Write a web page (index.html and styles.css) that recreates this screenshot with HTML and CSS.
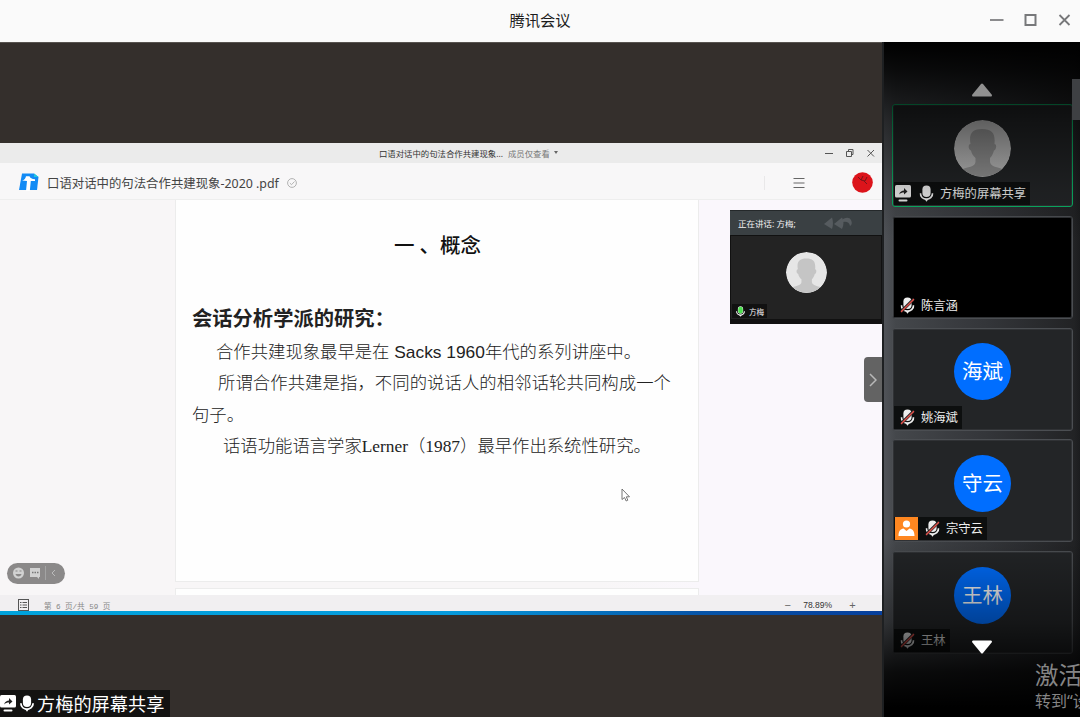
FILE: index.html
```html
<!DOCTYPE html>
<html lang="zh-CN">
<head>
  <meta charset="UTF-8">
  <meta name="viewport" content="width=device-width, initial-scale=1.0">
  <title>腾讯会议</title>
  <link rel="stylesheet" href="styles.css">
</head>
<body>

  <svg class="defs" width="0" height="0">
    <symbol id="mic" viewBox="0 0 14 17">
      <rect x="2.9" y="0.5" width="8.2" height="11.5" rx="4.1" fill="currentColor"/>
      <path d="M0.9 8.2c0 7.800 12.200 7.800 12.200 0" fill="none" stroke="currentColor" stroke-width="1.8"/>
      <path d="M5 14h4l-2 2.800z" fill="currentColor"/>
    </symbol>
    <symbol id="mic-off" viewBox="0 0 14 17">
      <use href="#mic"/>
      <path d="M0.6 14.6L13.3 2" stroke="#222" stroke-width="3"/>
      <path d="M0.4 15L13.6 2" stroke="#e2504a" stroke-width="1.5"/>
    </symbol>
    <symbol id="share" viewBox="0 0 16 17">
      <rect width="16" height="12.5" rx="1.5" fill="currentColor"/>
      <path d="M4 9.5C5 6.500 7 5.500 9 5.500V3l3.500 3.500L9 9.500V7.500C7 7.500 5.500 8 4 9.500z" fill="#222"/>
      <rect x="3.500" y="14.500" width="9" height="2" rx="1" fill="currentColor"/>
    </symbol>
    <symbol id="person" viewBox="0 0 57 57">
      <path d="M9 49C13 47 21 47 21.500 42L21.500 38C19 36 17.500 33 17 30.500C14 30 14 24 16.500 24C14.500 13 19 9 28 9C38 9 41.500 13 40.500 24C43 24 42.500 30 40 30.500C39 34 38 36 36 38L36 42C37 47 44 47 48 49C38 59 19 59 9 49Z"/>
    </symbol>
  </svg>

  <!-- Título da janela -->
  <header class="titlebar">
    <span class="titlebar-text">腾讯会议</span>
    <svg class="titlebar-buttons" width="84" height="14" viewBox="0 0 84 14" fill="none">
      <path d="M0 7h13.500" stroke="#8b8b8d" stroke-width="2"/>
      <rect x="35.500" y="2" width="10" height="10" stroke="#77787a" stroke-width="2"/>
      <path d="M69.500 2l10 10M79.500 2l-10 10" stroke="#77787a" stroke-width="1.800"/>
    </svg>
  </header>

  <main class="meeting">
    <section class="stage">
      <div class="screen">
        <div class="win-title">
          <span class="win-name">口语对话中的句法合作共建现象...</span>
          <span class="win-perm">成员仅查看</span>
          <i class="caret"></i>
          <svg class="win-buttons" width="52" height="10" viewBox="0 0 52 10" fill="none" stroke="#555" stroke-width="1">
            <path d="M1 5.500h8M43.500 2l6.500 6.500M50 2l-6.500 6.500"/>
            <path d="M22.500 3.500h5v5h-5zM24.500 3.500v-2h4.500v5h-1.500"/>
          </svg>
        </div>

        <div class="toolbar">
          <svg class="doc-logo" width="20" height="18" viewBox="0 0 20 18">
            <path d="M3 0.500H15L19.500 4L18 17H0z" fill="#138bf5"/>
            <path d="M15 0.500L19.500 4H15z" fill="#20c8dc"/>
            <path d="M3 7.600C5.500 7 6.500 5.500 7 3.200L10.500 3.200C11 5 13 6 16 6.300V8H11.800L10.800 18H7L8 8z" fill="#fff"/>
          </svg>
          <span class="doc-name">口语对话中的句法合作共建现象-2020 .pdf</span>
          <svg class="doc-check" width="10" height="10" viewBox="0 0 10 10" fill="none" stroke="#aaa" stroke-width="0.900">
            <circle cx="5" cy="5" r="4.400"/>
            <path d="M2.800 5l1.700 1.700L7.500 3.500"/>
          </svg>
          <span class="tool-divider"></span>
          <svg class="menu-icon" width="12" height="12" viewBox="0 0 12 12" stroke="#666" stroke-width="1.100">
            <path d="M0.500 1.500h11M0.500 6h11M0.500 10.500h11"/>
          </svg>
          <svg class="user-icon" width="21" height="21" viewBox="0 0 21 21">
            <circle cx="10.500" cy="10.500" r="10.300" fill="#dc141b"/>
            <path d="M6 5l3 3 2-4M9 8l4 1 2-4M12 9l3 3" fill="none" stroke="#77151a" stroke-width="1"/>
          </svg>
        </div>

        <div class="document">
          <div class="page">
            <h1>一<span class="gap"></span>、概念</h1>
            <h2>会话分析学派的研究：</h2>
            <p class="line line-1">合作共建现象最早是在<span class="latin"> Sacks 1960</span>年代的系列讲座中。</p>
            <p class="line line-2">所谓合作共建是指，不同的说话人的相邻话轮共同构成一个</p>
            <p class="line">句子。</p>
            <p class="line line-4">话语功能语言学家<span class="roman">Lerner</span>（<span class="roman">1987</span>）最早作出系统性研究。</p>
          </div>
          <div class="page-next"></div>

          <svg class="cursor" width="10" height="14" viewBox="0 0 10 14">
            <path d="M1 1v10.500l2.500-2 1.700 3.500 1.600-0.800-1.500-3.400H8.500z" fill="#fff" stroke="#666" stroke-width="0.900"/>
          </svg>

          <div class="reactions">
            <svg width="58" height="20" viewBox="0 0 58 20">
              <circle cx="11.500" cy="10" r="5.500" fill="#d2d2d2"/>
              <path d="M8.500 11h6c-.5 3.200-5.500 3.200-6 0z" fill="#8b8989"/>
              <path d="M8.500 8h2M12.500 8h2" stroke="#8b8989" stroke-width="1"/>
              <path d="M23 5h10v9h-1v2l-2-2h-7z" fill="#d2d2d2"/>
              <path d="M25 9.500h1.500M27.500 9.500h1.500M30 9.500h1.500" stroke="#777" stroke-width="1.300"/>
              <path d="M38.500 3v14" stroke="#a3a3a3" stroke-width="1"/>
              <path d="M48 7l-3 3 3 3" fill="none" stroke="#bbb" stroke-width="1"/>
            </svg>
          </div>

          <div class="pip">
            <div class="pip-head">
              <span>正在讲话: 方梅;</span>
              <svg width="30" height="14" viewBox="0 0 30 14">
                <path d="M0 8l8-6.500q2 6 0 11.500zM10 8l8-6.500q3 5 0 11.500zM19 3q6-3 8 1 2 4-1 6-1-5-7-4z" fill="#565b5f"/>
              </svg>
            </div>
            <div class="pip-body">
              <svg class="pip-avatar" viewBox="0 0 57 57"><circle cx="28.500" cy="28.500" r="28.500" fill="#e6e6e6"/><use href="#person" fill="#c5c5c5"/></svg>
              <div class="pip-label">
                <svg class="mic-small" viewBox="0 0 14 17"><use href="#mic"/><rect x="3.500" y="1" width="7" height="10.500" rx="3.500" fill="#4be04e"/></svg>
                <span>方梅</span>
              </div>
            </div>
          </div>
        </div>

        <footer class="status">
          <svg class="list-icon" width="11" height="12" viewBox="0 0 11 12" fill="none" stroke="#555" stroke-width="1">
            <rect x="0.500" y="0.500" width="10" height="11"/>
            <path d="M2 3.500h1.500M4.500 3.500H9M2 6h1.500M4.500 6H9M2 8.500h1.500M4.500 8.500H9"/>
          </svg>
          <span class="page-count">第 6 页/共 59 页</span>
          <span class="zoom"><b>−</b><span>78.89%</span><b>+</b></span>
        </footer>
        <div class="taskbar"></div>
      </div>

      <button class="collapse">
        <svg width="8" height="14" viewBox="0 0 8 14"><path d="M1 1l6 6-6 6" fill="none" stroke="#b8b8b8" stroke-width="1.500"/></svg>
      </button>

      <div class="stage-label">
        <svg class="share-icon" viewBox="0 0 16 17"><use href="#share"/></svg>
        <svg class="mic-icon" viewBox="0 0 14 17"><use href="#mic"/></svg>
        <span>方梅的屏幕共享</span>
      </div>
    </section>

    <!-- Lista de participantes -->
    <aside class="sidebar">
      <div class="tiles">
        <div class="tile speaking">
          <svg class="avatar avatar-empty" viewBox="0 0 57 57"><circle cx="28.500" cy="28.500" r="28.500" fill="#c2c2c2"/><use href="#person" fill="#979797"/></svg>
          <div class="tag tag-share">
            <svg class="share-icon" viewBox="0 0 16 17"><use href="#share"/></svg>
            <svg class="mic-icon" viewBox="0 0 14 17"><use href="#mic"/></svg>
            <span>方梅的屏幕共享</span>
          </div>
        </div>
        <div class="tile video">
          <div class="tag">
            <svg class="mic-icon" viewBox="0 0 14 17"><use href="#mic-off"/></svg>
            <span>陈言涵</span>
          </div>
        </div>
        <div class="tile">
          <div class="avatar">海斌</div>
          <div class="tag">
            <svg class="mic-icon" viewBox="0 0 14 17"><use href="#mic-off"/></svg>
            <span>姚海斌</span>
          </div>
        </div>
        <div class="tile">
          <div class="avatar">守云</div>
          <div class="tag tag-host">
            <svg class="host-icon" width="23" height="23" viewBox="0 0 23 23">
              <rect width="23" height="23" fill="#ff8720"/>
              <circle cx="11.500" cy="7" r="3.600" fill="#fff"/>
              <path d="M3.500 19c0-5 2-7 5-7.500l3 2.500 3-2.500c3 .5 5 2.500 5 7.500z" fill="#fff"/>
            </svg>
            <svg class="mic-icon" viewBox="0 0 14 17"><use href="#mic-off"/></svg>
            <span>宗守云</span>
          </div>
        </div>
        <div class="tile">
          <div class="avatar">王林</div>
          <div class="tag">
            <svg class="mic-icon" viewBox="0 0 14 17"><use href="#mic-off"/></svg>
            <span>王林</span>
          </div>
        </div>
      </div>
      <div class="fade"></div>
      <svg class="arrow arrow-up" width="22" height="14" viewBox="0 0 22 14"><path d="M10 1q1-1 2 0l9 11q0 1.500-1 1.500H2q-1 0-1-1.500z" fill="#909090"/></svg>
      <svg class="arrow arrow-down" width="22" height="14" viewBox="0 0 22 14"><path d="M10 13q1 1 2 0l9-11q0-1.500-1-1.500H2q-1 0-1 1.500z" fill="#fff"/></svg>
      <div class="scroll-tab"></div>
      <div class="watermark">
        <div class="watermark-big">激活</div>
        <div class="watermark-small">转到“设</div>
      </div>
    </aside>
  </main>

</body>
</html>
```
FILE: styles.css
```css
* {
  box-sizing: border-box;
}
body {
  margin: 0;
  width: 1080px;
  height: 717px;
  overflow: hidden;
  display: flex;
  flex-direction: column;
  font-family: "Noto Sans", "Noto Sans CJK SC", sans-serif;
  background: #342f2c;
}
svg {
  display: block;
  flex: none;
}
.defs {
  position: absolute;
}
span {
  white-space: nowrap;
}
/* Barra de título */
.titlebar {
  height: 42px;
  flex: none;
  display: grid;
  grid-template-columns: 1fr auto 1fr;
  align-items: center;
  padding-bottom: 2px;
  background: #fafafa;
}
.titlebar-text {
  grid-column: 2;
  padding-bottom: 2px;
  font-size: 15.300px;
  color: #1c1c1c;
}
.titlebar-buttons {
  justify-self: end;
  margin-right: 6px;
}
.meeting {
  display: flex;
  height: 675px;
}
/* Tela compartilhada */
.stage {
  position: relative;
  width: 882px;
  padding-top: 101px;
  background: #342f2c;
  border-top: 1px solid #57534f;
}
.screen {
  display: flex;
  flex-direction: column;
  height: 472px;
  margin-top: -1px;
}
.win-title {
  height: 20px;
  display: flex;
  align-items: center;
  padding: 0 0 1px 379px;
  background: #ebebeb;
  font-size: 8.400px;
  color: #333;
}
.win-perm {
  margin-left: 5px;
  color: #777;
}
.caret {
  margin-left: 4px;
  border: 2px solid transparent;
  border-top: 3px solid #666;
  border-bottom: 0;
}
.win-buttons {
  margin-left: auto;
  margin-right: 6px;
}
.toolbar {
  height: 37px;
  display: flex;
  align-items: center;
  padding: 3px 9px 0 19px;
  background: #f8f7f8;
  border-bottom: 1px solid #eee;
}
.doc-logo {
  margin-bottom: 2px;
}
.doc-name {
  margin-left: 8px;
  padding-top: 1px;
  font-size: 12.400px;
  color: #444;
}
.doc-check {
  margin-left: 8px;
}
.tool-divider {
  width: 1px;
  height: 14px;
  margin-left: auto;
  background: #e9e8e9;
}
.menu-icon {
  margin-left: 28px;
}
.user-icon {
  margin-left: 47px;
}
.document {
  position: relative;
  height: 395px;
  padding-left: 175px;
  background: linear-gradient(90deg, #f8f6f7 0, #f8f6f7 600px, #faf7fc 700px);
}
.page {
  width: 524px;
  height: 382px;
  background: #fefefe;
  border: 1px solid #ececec;
  border-top: 0;
  padding: 30px 0 0 16px;
}
.page-next {
  width: 524px;
  height: 7px;
  margin-top: 6px;
  background: #fefefe;
  border: 1px solid #ececec;
  border-bottom: 0;
}
.page h1 {
  margin: 0 0 0 202px;
  font-size: 20.500px;
  line-height: 30px;
  font-weight: 500;
  color: #111;
}
.gap {
  display: inline-block;
  width: 5px;
}
.page h2 {
  margin: 43px 0 3px;
  font-size: 20.300px;
  line-height: 30px;
  font-weight: 700;
  color: #222;
}
.line {
  margin: 0;
  height: 31.300px;
  font-size: 17.350px;
  line-height: 31.300px;
  font-weight: 300;
  white-space: nowrap;
  color: #222;
}
.line-1 {
  padding-left: 24px;
}
.line-2 {
  padding-left: 26px;
  letter-spacing: 0.080px;
}
.line-4 {
  padding-left: 31px;
}
.latin {
  font-family: "Liberation Sans", Arial, sans-serif;
  font-weight: 400;
  white-space: pre;
}
.roman {
  font-family: "Liberation Serif", "Times New Roman", serif;
  font-weight: 400;
}
.cursor {
  position: absolute;
  left: 621px;
  top: 288px;
}
.reactions {
  position: absolute;
  left: 7px;
  top: 363px;
  height: 21px;
  border-radius: 11px;
  background: #8b8989;
}
/* Miniatura do orador */
.pip {
  position: absolute;
  left: 730px;
  top: 10px;
  width: 152px;
  height: 114px;
  background: #232323;
  color: #f2f2f2;
}
.pip-head {
  height: 25px;
  display: flex;
  align-items: center;
  justify-content: space-between;
  padding: 0 28px 0 8px;
  background: #3a4043;
  border-top: 1px solid #24282a;
  font-size: 8.500px;
}
.pip-head span {
  padding-bottom: 1px;
}
.pip-body {
  position: relative;
  height: 89px;
  padding-top: 16px;
  border: 1px solid #111;
  border-width: 1px 1px 5px;
}
.pip-avatar {
  width: 41px;
  height: 41px;
  margin: 0 auto;
  border-radius: 50%;
}
.pip-label {
  position: absolute;
  left: 1px;
  bottom: 1px;
  display: flex;
  align-items: center;
  gap: 4px;
  height: 14px;
  padding: 0 3px 0 4px;
  background: #111;
  font-size: 7.600px;
}
.mic-small {
  width: 9px;
  height: 11px;
}
/* Rodapé do documento */
.status {
  height: 17px;
  display: flex;
  align-items: center;
  padding: 2px 25px 0 18px;
  background: #f1eff1;
}
.page-count {
  margin-left: 15px;
  padding-top: 2px;
  font-family: "Liberation Mono", "Noto Sans CJK SC", monospace;
  font-size: 7.600px;
  letter-spacing: -0.050px;
  color: #888;
}
.zoom {
  margin-left: auto;
  display: flex;
  align-items: center;
  gap: 11px;
  font-family: "Liberation Sans", Arial, sans-serif;
  font-size: 8.500px;
  color: #333;
}
.zoom span {
  margin-right: 5px;
}
.zoom b {
  width: 9px;
  font-size: 11px;
  line-height: 12px;
  text-align: center;
  font-weight: 400;
  color: #666;
}
.taskbar {
  height: 4px;
  margin-top: -1px;
  background: linear-gradient(90deg, #00a3dc 0, #079bdd 450px, #0654a8 700px, #063f9c 100%);
}
.collapse {
  position: absolute;
  right: 0;
  top: 314px;
  width: 18px;
  height: 45px;
  padding: 0 0 0 5px;
  border: 0;
  border-radius: 4px 0 0 4px;
  background: #636363;
}
.stage-label {
  position: absolute;
  left: 0;
  bottom: 0;
  width: 170px;
  height: 27px;
  display: flex;
  align-items: center;
  background: #131211;
  color: #fff;
  font-size: 18.200px;
}
.stage-label span {
  padding-bottom: 2px;
}
.stage-label .mic-icon {
  margin: 0 3px 0 4px;
}
.share-icon {
  width: 16px;
  height: 17px;
}
.mic-icon {
  width: 14px;
  height: 17px;
}
/* Participantes */
.sidebar {
  position: relative;
  width: 198px;
  padding: 62px 7px 0 10px;
  overflow: hidden;
  border-left: 2px solid #1e2022;
  background: linear-gradient(90deg, #505358 0, #44474b 12px, #34363a 100px, #222325 190px, #1c1d1f 100%);
}
.tiles {
  display: grid;
  grid-template-rows: repeat(5, 103px);
  row-gap: 8.800px;
  margin-left: -2px;
}
.tile {
  position: relative;
  width: 181px;
  padding-top: 14.500px;
  border: 1px solid #4b4e52;
  border-radius: 3px;
  box-shadow: inset 0 0 0 1px #303235;
  background: #232527;
}
.tile.speaking {
  border-color: #0bb567;
}
.tile.video,
.video .tag {
  background: #000;
}
.avatar {
  width: 57px;
  height: 57px;
  margin: 0 auto;
  border-radius: 50%;
  background: #006eff;
  color: #fff;
  font-size: 20.500px;
  line-height: 56px;
  text-align: center;
}
.avatar-empty {
  background: none;
}
.tag {
  position: absolute;
  left: 1px;
  bottom: 1px;
  height: 23px;
  display: flex;
  align-items: center;
  gap: 6px;
  padding: 0 4px 0 6px;
  background: #0d0f0f;
  color: #eee;
  font-size: 12.300px;
}
.tag span {
  padding-bottom: 1px;
}
.tag .mic-icon {
  width: 15px;
  height: 17px;
}
.tag-share {
  padding: 0 4px 0 1px;
}
.tag-share .mic-icon {
  margin-left: 2px;
}
.tag-host {
  padding-left: 1px;
}
.tag-host .mic-icon {
  margin-left: 1px;
}
.fade {
  position: absolute;
  inset: 0;
  background: linear-gradient(180deg, #000 0, rgba(0,0,0,0.850) 28px, rgba(0,0,0,0.500) 80px, rgba(0,0,0,0.150) 150px, transparent 200px, transparent 495px, rgba(0,0,0,0.400) 580px, rgba(0,0,0,0.850) 630px, #000 665px);
}
.arrow {
  position: absolute;
  left: 87px;
}
.arrow-up {
  top: 41px;
}
.arrow-down {
  top: 598px;
}
.scroll-tab {
  position: absolute;
  right: 0;
  top: 37px;
  width: 8px;
  height: 41px;
  background: #3e4043;
}
.watermark {
  position: absolute;
  left: 151px;
  top: 618px;
  width: 60px;
  color: #858585;
  white-space: nowrap;
}
.watermark-big {
  font-size: 23.500px;
  line-height: 30px;
}
.watermark-small {
  font-size: 16px;
  line-height: 22px;
}
```
